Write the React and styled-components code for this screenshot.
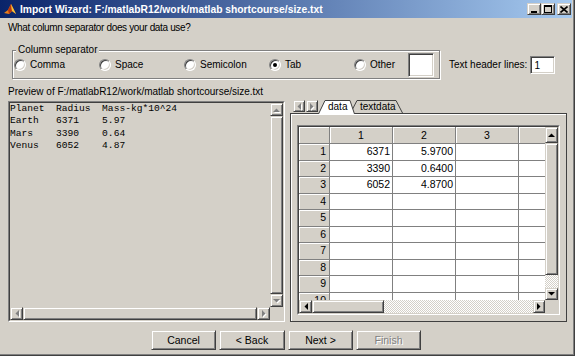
import styled, { createGlobalStyle, css } from "styled-components";

const GlobalStyle = createGlobalStyle`
  html, body {
    margin: 0;
    padding: 0;
    background: #d4d0c8;
  }
  body {
    font-family: "Liberation Sans", Arial, sans-serif;
    font-size: 10px;
    line-height: 13px;
    color: #000;
  }
  * {
    box-sizing: border-box;
  }
`;

const raised = css`
  background: #d4d0c8;
  border: 1px solid;
  border-color: #d4d0c8 #404040 #404040 #d4d0c8;
  box-shadow: inset 1px 1px #fff, inset -1px -1px #808080;
`;

const sunken = css`
  border: 1px solid;
  border-color: #808080 #fff #fff #808080;
  box-shadow: inset 1px 1px #404040, inset -1px -1px #d4d0c8;
`;

const Window = styled.div`
  width: 575px;
  height: 356px;
  background: #d4d0c8;
  border-right: 1px solid #404040;
  border-bottom: 1px solid #404040;
  box-shadow: inset -1px -1px #808080;
  padding: 0 2px 2px 0;
  display: flex;
  flex-direction: column;
  overflow: hidden;
`;

const TitleBar = styled.div`
  height: 18px;
  flex: none;
  background: linear-gradient(to right, #0a246a, #a6caf0);
  display: flex;
  align-items: center;
  padding: 0 1px 0 3px;
  color: #fff;
  font-size: 10.3px;
  font-weight: bold;
`;

const TitleText = styled.span`
  margin-left: 3px;
  flex: 1;
  white-space: nowrap;
`;

const CtrlButton = styled.div`
  ${raised}
  width: 14px;
  height: 12px;
  display: flex;
  align-items: center;
  justify-content: center;
  margin-left: ${(p) => p.$gap || 0}px;
`;

const Prompt = styled.div`
  height: 16px;
  padding: 3px 0 0 8px;
  letter-spacing: -0.35px;
`;

const SeparatorRow = styled.div`
  display: flex;
  align-items: center;
  height: 29px;
  margin-top: 16px;
  padding-left: 12px;
`;

const GroupBox = styled.div`
  position: relative;
  width: 428px;
  height: 29px;
  border: 1px solid #808080;
  box-shadow: inset 1px 1px #fff, 1px 1px #fff;
  display: flex;
  align-items: center;
  padding-left: 1px;
`;

const GroupLabel = styled.span`
  position: absolute;
  top: -8px;
  left: 3px;
  padding: 0 2px;
  background: #d4d0c8;
`;

const Option = styled.label`
  display: flex;
  align-items: center;
  gap: 4px;
  width: ${(p) => (p.$w ? `${p.$w}px` : "auto")};
  height: 13px;
`;

const RadioDot = styled.span`
  width: 12px;
  height: 12px;
  border-radius: 50%;
  border: 1px solid;
  border-color: #808080 #fff #fff #808080;
  box-shadow: inset 1px 1px #404040, inset -1px -1px #d4d0c8;
  background: #fff;
  display: flex;
  align-items: center;
  justify-content: center;
  flex: none;

  &::after {
    content: "";
    width: 4px;
    height: 4px;
    border-radius: 50%;
    background: ${(p) => (p.$on ? "#000" : "transparent")};
  }
`;

const TextBox = styled.div`
  ${sunken}
  background: #fff;
  width: ${(p) => p.$w}px;
  height: ${(p) => p.$h}px;
  padding: 2px 0 0 3px;
  margin-left: ${(p) => (p.$push ? "auto" : "0")};
  margin-right: ${(p) => p.$mr || 0}px;
`;

const HeaderLines = styled.div`
  display: flex;
  align-items: center;
  margin-left: 9px;
  gap: 3px;
`;

const PreviewLabel = styled.div`
  height: 13px;
  margin-top: 6px;
  padding-left: 8px;
`;

const MainRow = styled.div`
  display: flex;
  height: 222px;
  flex: none;
  margin-top: 2px;
  padding-left: 8px;
  gap: 5px;
`;

const OuterSunken = styled.div`
  border: 1px solid;
  border-color: #808080 #fff #fff #808080;
`;

const InnerSunken = styled.div`
  width: 100%;
  height: 100%;
  border: 1px solid;
  border-color: #404040 #d4d0c8 #d4d0c8 #404040;
  display: grid;
  grid-template-columns: minmax(0, 1fr) 13px;
  grid-template-rows: minmax(0, 1fr) 13px;
  overflow: hidden;
`;

const PreviewPanel = styled(OuterSunken)`
  width: 277px;
  height: 221px;
  margin-top: 1px;
`;

const PreviewText = styled.pre`
  margin: 0;
  padding: 0;
  font-family: "Liberation Mono", "Courier New", monospace;
  font-size: 9.6px;
  line-height: 12.3px;
  overflow: hidden;
`;

const VScroll = styled.div`
  display: flex;
  flex-direction: column;
  overflow: hidden;
`;

const HScroll = styled.div`
  display: flex;
  overflow: hidden;
`;

const ScrollBtn = styled.div`
  ${raised}
  flex: none;
  width: ${(p) => p.$w || 13}px;
  height: ${(p) => p.$h || 13}px;
  display: flex;
  align-items: center;
  justify-content: center;

  svg {
    fill: ${(p) => (p.$off ? "#808080" : "#000")};
    ${(p) => p.$off && "filter: drop-shadow(1px 1px 0 #fff);"}
  }
`;

const Thumb = styled.div`
  ${raised}
  flex: ${(p) => (p.$size ? "none" : 1)};
  ${(p) => (p.$vertical ? `height: ${p.$size}px;` : `width: ${p.$size}px;`)}
`;

const Track = styled.div`
  flex: 1;
  background: repeating-conic-gradient(#fff 0 25%, #d4d0c8 0 50%) 0 0 / 2px 2px;
`;

const Corner = styled.div`
  background: #d4d0c8;
`;

const RightColumn = styled.div`
  width: 277px;
  height: 222px;
  display: flex;
  flex-direction: column;
`;

const TabStrip = styled.div`
  position: relative;
  z-index: 1;
  height: 13px;
  flex: none;
  display: flex;
  align-items: flex-end;
  padding-left: 3px;
`;

const TabArrows = styled.div`
  display: flex;
  gap: 1px;
  align-self: flex-start;
`;

const Tab = styled.div`
  position: relative;
  width: ${(p) => p.$w}px;
  height: ${(p) => (p.$active ? 14 : 13)}px;
  margin-bottom: ${(p) => (p.$active ? -1 : 0)}px;
  margin-left: ${(p) => p.$ml || 0}px;
  z-index: ${(p) => (p.$active ? 2 : 1)};
  padding: 0 0 0 10px;
  line-height: 13px;
  white-space: nowrap;

  svg {
    position: absolute;
    left: 0;
    top: 0;
  }
  span {
    position: relative;
  }
`;

const TabPanel = styled.div`
  height: 209px;
  min-height: 0;
  border: 1px solid #404040;
  box-shadow: inset 1px 1px #fff;
  padding: 11px 6px 6px 6px;
`;

const TableFrame = styled(OuterSunken)`
  width: 263px;
  height: 190px;
`;

const TableGrid = styled.div`
  display: grid;
  grid-template-columns: 31px repeat(4, 63px);
  grid-template-rows: 17px;
  grid-auto-rows: 16.5px;
  overflow: hidden;
  background: #fff;
  font-size: 10.5px;
`;

const HeadCell = styled.div`
  background: #d4d0c8;
  border-right: 1px solid #808080;
  border-bottom: 1px solid #808080;
  box-shadow: inset 1px 1px #fff;
  display: flex;
  align-items: center;
  justify-content: ${(p) => (p.$right ? "flex-end" : "center")};
  padding-right: ${(p) => (p.$right ? 3 : 0)}px;
`;

const Cell = styled.div`
  background: #fff;
  border-right: 1px solid #808080;
  border-bottom: 1px solid #808080;
  display: flex;
  align-items: center;
  justify-content: flex-end;
  padding-right: 2px;
`;

const ButtonRow = styled.div`
  display: flex;
  justify-content: center;
  gap: 3px;
  margin-top: 8px;
  height: 20px;
  flex: none;
`;

const Button = styled.button`
  ${raised}
  width: ${(p) => p.$w || 65}px;
  height: 20px;
  padding: 0;
  font-family: inherit;
  font-size: 10.5px;
  color: ${(p) => (p.disabled ? "#808080" : "#000")};
  text-shadow: ${(p) => (p.disabled ? "1px 1px #fff" : "none")};
`;

function Arrow({ dir }) {
  const pts = {
    up: "0,4 7,4 3.5,0.5",
    down: "0,0 7,0 3.5,3.5",
    left: "4,0 4,7 0.5,3.5",
    right: "0,0 0,7 3.5,3.5",
  }[dir];
  const vertical = dir === "up" || dir === "down";
  return (
    <svg width={vertical ? 7 : 4} height={vertical ? 4 : 7}>
      <polygon points={pts} />
    </svg>
  );
}

function MatlabIcon() {
  return (
    <svg width="14" height="14" viewBox="0 0 14 14">
      <path d="M1 11 L5 8 L8 2 L10 6 L13 12 L9 9 L6 12 Z" fill="#e8801c" />
      <path d="M5 8 L8 2 L9 9 L6 12 Z" fill="#b8360c" />
      <path d="M8 2 L10 6 L13 12 L9 9 Z" fill="#f7c23a" />
    </svg>
  );
}

const previewLines = `Planet  Radius  Mass-kg*10^24
Earth   6371    5.97
Mars    3390    0.64
Venus   6052    4.87`;

const tableRows = [
  ["6371", "5.9700"],
  ["3390", "0.6400"],
  ["6052", "4.8700"],
  [], [], [], [], [], [], [],
];

const separators = [
  { label: "Comma", w: 85 },
  { label: "Space", w: 85 },
  { label: "Semicolon", w: 85 },
  { label: "Tab", w: 85, on: true },
  { label: "Other" },
];

export default function App() {
  return (
    <>
      <GlobalStyle />
      <Window>
        <TitleBar>
          <MatlabIcon />
          <TitleText>Import Wizard: F:/matlabR12/work/matlab shortcourse/size.txt</TitleText>
          <CtrlButton>
            <svg width="6" height="8"><rect x="0" y="6" width="6" height="2" fill="#000" /></svg>
          </CtrlButton>
          <CtrlButton>
            <svg width="8" height="8">
              <rect x="0.5" y="0.5" width="7" height="7" fill="none" stroke="#000" />
              <rect x="0" y="0" width="8" height="2" fill="#000" />
            </svg>
          </CtrlButton>
          <CtrlButton $gap={2}>
            <svg width="8" height="7">
              <path d="M0.5 0.5 L7.5 6.5 M7.5 0.5 L0.5 6.5" stroke="#000" strokeWidth="1.6" />
            </svg>
          </CtrlButton>
        </TitleBar>

        <Prompt>What column separator does your data use?</Prompt>

        <SeparatorRow>
          <GroupBox>
            <GroupLabel>Column separator</GroupLabel>
            {separators.map((s) => (
              <Option key={s.label} $w={s.w}>
                <RadioDot $on={s.on} />
                {s.label}
              </Option>
            ))}
            <TextBox $w={26} $h={24} $mr={5} $push />
          </GroupBox>
          <HeaderLines>
            Text header lines:
            <TextBox $w={25} $h={18}>1</TextBox>
          </HeaderLines>
        </SeparatorRow>

        <PreviewLabel>Preview of F:/matlabR12/work/matlab shortcourse/size.txt</PreviewLabel>

        <MainRow>
          <PreviewPanel>
            <InnerSunken>
              <PreviewText>{previewLines}</PreviewText>
              <VScroll>
                <ScrollBtn $off><Arrow dir="up" /></ScrollBtn>
                <Thumb $vertical />
                <ScrollBtn $off><Arrow dir="down" /></ScrollBtn>
              </VScroll>
              <HScroll>
                <ScrollBtn $off><Arrow dir="left" /></ScrollBtn>
                <Thumb />
                <ScrollBtn $off><Arrow dir="right" /></ScrollBtn>
              </HScroll>
              <Corner />
            </InnerSunken>
          </PreviewPanel>

          <RightColumn>
            <TabStrip>
              <TabArrows>
                <ScrollBtn $w={12} $h={12} $off><Arrow dir="left" /></ScrollBtn>
                <ScrollBtn $w={12} $h={12} $off><Arrow dir="right" /></ScrollBtn>
              </TabArrows>
              <Tab $w={37} $active>
                <svg width="37" height="14">
                  <path d="M0.5 14 L7 0.5 H32 L36.5 14" fill="#fff" stroke="#404040" />
                </svg>
                <span>data</span>
              </Tab>
              <Tab $w={53} $ml={-5}>
                <svg width="53" height="13">
                  <path d="M0.5 13 L7 0.5 H46 L52.5 13" fill="#d4d0c8" stroke="#404040" />
                </svg>
                <span>textdata</span>
              </Tab>
            </TabStrip>
            <TabPanel>
              <TableFrame>
                <InnerSunken>
                  <TableGrid>
                    <HeadCell />
                    <HeadCell>1</HeadCell>
                    <HeadCell>2</HeadCell>
                    <HeadCell>3</HeadCell>
                    <HeadCell />
                    {tableRows.map((row, i) => [
                      <HeadCell key={`h${i}`} $right>{i + 1}</HeadCell>,
                      <Cell key={`a${i}`}>{row[0]}</Cell>,
                      <Cell key={`b${i}`}>{row[1]}</Cell>,
                      <Cell key={`c${i}`} />,
                      <Cell key={`d${i}`} />,
                    ])}
                  </TableGrid>
                  <VScroll>
                    <ScrollBtn $h={16}><Arrow dir="up" /></ScrollBtn>
                    <Thumb $vertical $size={132} />
                    <Track />
                    <ScrollBtn $h={12}><Arrow dir="down" /></ScrollBtn>
                  </VScroll>
                  <HScroll>
                    <ScrollBtn><Arrow dir="left" /></ScrollBtn>
                    <Thumb $size={72} />
                    <Track />
                    <ScrollBtn $w={12}><Arrow dir="right" /></ScrollBtn>
                  </HScroll>
                  <Corner />
                </InnerSunken>
              </TableFrame>
            </TabPanel>
          </RightColumn>
        </MainRow>

        <ButtonRow>
          <Button>Cancel</Button>
          <Button $w={66}>&lt; Back</Button>
          <Button>Next &gt;</Button>
          <Button disabled>Finish</Button>
        </ButtonRow>
      </Window>
    </>
  );
}
